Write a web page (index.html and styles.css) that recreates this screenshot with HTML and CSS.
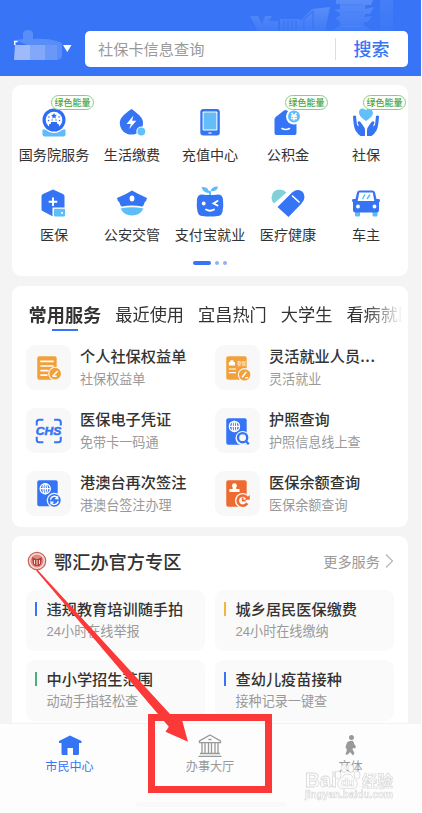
FILE: index.html
```html
<!DOCTYPE html>
<html lang="zh-CN">
<head>
<meta charset="utf-8">
<title>市民中心</title>
<link rel="stylesheet" href="styles.css">
</head>
<body>
<div class="app">
  <header class="header">
    <svg class="skyline" width="172" height="31" viewBox="0 0 172 31">
      <defs><linearGradient id="sky" x1="0" y1="0" x2="0" y2="1"><stop offset="0" stop-color="#7ba5fb" stop-opacity=".5"/><stop offset="1" stop-color="#6f9dfa" stop-opacity=".15"/></linearGradient></defs>
      <path fill="url(#sky)" d="M0 16h8l4 8 3-8h7l-3 5h9v10H8zM30 19h20v12H30zM50 21l12-12 18-2-5 24H50z"/>
      <path d="M54 31V19l9-8v20M34 20v11M38 20v11M42 20v11M46 20v11" stroke="#3b77f5" stroke-width="1.2" fill="none"/>
      <path fill="url(#sky)" d="M86 0h37l-2 5h-6v4l9-2-4 7h-5v3l7-1-4 6h-4v3l8 6H82l8-6v-3l-5-4 5-2v-3l-6-3 6-1V4h-4z"/>
      <path d="M91 5h22M91 12h22M91 19h22M90 26h24" stroke="#4c82f6" stroke-width="1.5"/>
      <path fill="url(#sky)" d="M130 0h13v31h-13z" opacity=".4"/>
    </svg>
    <div class="city">
      <svg width="60" height="34" viewBox="0 0 60 34">
        <path fill="#598df8" d="M4 11l7-1V4q1-3 5-3t5 3v6q14-1 24 2l5 2v13q-1 4-6 4H15V16z"/>
        <path fill="#9ebafb" d="M3 16h15v15H2z"/><path fill="#83a8fa" d="M18 16h15v15H18z"/><path fill="#6a98f9" d="M33 16h12v15H33z"/>
        <path d="M2.700 16v-3.500h3" stroke="#fff" stroke-width="1.500" fill="none"/><path fill="#fff" d="M51 16h8.500l-4.200 7z"/>
      </svg>
    </div>
    <div class="search"><span class="placeholder">社保卡信息查询</span><span class="search-btn">搜索</span></div>
  </header>

  <main class="main">
    <section class="card apps">
      <div class="app-grid">
        <div class="app-item"><span class="badge">绿色能量</span>
          <svg class="ico" viewBox="0 0 30 30"><path fill="#5fbcf8" d="M3.500 22.500h23v5q0 2-2 2h-19q-2 0-2-2z"/><circle cx="15" cy="13.500" r="12.500" fill="#fff"/><circle cx="15" cy="13" r="11.500" fill="#2f6cf5"/><circle cx="15" cy="13" r="8.300" fill="#fff"/><path fill="#2f6cf5" d="M10 21.500v-4l2-1v-1.500h6v1.500l2 1v4q-5 2-10 0zM15 6l.9 1.800 2 .3-1.400 1.400.3 2-1.800-1-1.800 1 .3-2-1.400-1.400 2-.3z"/><g fill="#2f6cf5"><circle cx="10" cy="10" r=".8"/><circle cx="20" cy="10" r=".8"/><circle cx="9.500" cy="13.500" r=".8"/><circle cx="20.500" cy="13.500" r=".8"/><circle cx="13" cy="13" r=".7"/><circle cx="17" cy="13" r=".7"/></g></svg>
          <span class="app-label">国务院服务</span></div>
        <div class="app-item">
          <svg class="ico" viewBox="0 0 30 30"><path fill="#3574f5" d="M14.500 2Q17 3.500 22 8q4 3.700 4 8a11.600 11.600 0 0 1-23.200 0q0-4.300 4-8Q12 3.500 14.500 2z"/><path fill="#fff" d="M16.500 8.500l-7 8.500h4.300l-1.500 5 7-8.200h-4.200z"/><circle cx="24.300" cy="24.500" r="5" fill="#fff"/><circle cx="24.300" cy="24.500" r="3.900" fill="#5fc0fa"/></svg>
          <span class="app-label">生活缴费</span></div>
        <div class="app-item">
          <svg class="ico" viewBox="0 0 30 30"><rect x="5.300" y="2" width="19.500" height="26.500" rx="3" fill="#3574f5"/><rect x="7.600" y="4.500" width="14.800" height="19" rx="1" fill="#fff"/><rect x="8.600" y="5.500" width="12.800" height="17" rx=".5" fill="#62bdf9"/><path stroke="#fff" stroke-width="1.200" d="M13.500 26h3"/></svg>
          <span class="app-label">充值中心</span></div>
        <div class="app-item"><span class="badge">绿色能量</span>
          <svg class="ico" viewBox="0 0 30 30"><path fill="#3574f5" d="M1.500 26V12.500q0-1.500 1.200-2.500L11 3.500q1.500-1 3 0l9.500 7.500V26q0 2-2 2h-18q-2 0-2-2z"/><path d="M9 21.500q3.700 2 7.500 0" stroke="#fff" stroke-width="1.600" stroke-linecap="round" fill="none"/><circle cx="21" cy="9.500" r="8" fill="#fff"/><circle cx="21" cy="9.500" r="6" fill="#61bcf8"/><path d="M18.500 6l2.500 3 2.500-3M18 9.300h6M18 11.500h6M21 9v4.500" stroke="#fff" stroke-width="1.400" fill="none"/></svg>
          <span class="app-label">公积金</span></div>
        <div class="app-item"><span class="badge">绿色能量</span>
          <svg class="ico" viewBox="0 0 30 30"><path fill="#61bff9" d="M15 14Q8 9.500 8 5.500T11.700 1.500q2.200 0 3.300 1.800 1.100-1.800 3.300-1.800T22 5.500Q22 9.500 15 14z"/><path id="hand" fill="#3574f5" d="M2 9q1.500-1.200 3 0l1 9 2 1.500-1.500-4q1-2 3-.5l3.500 5q1 1.400 1 3V29H9.500Q7 27.500 4.500 23.500 2.500 20 2 9z"/><use href="#hand" transform="matrix(-1 0 0 1 30 0)"/></svg>
          <span class="app-label">社保</span></div>
        <div class="app-item">
          <svg class="ico" viewBox="0 0 30 30"><path fill="#3574f5" d="M14 1.500L24 6q1.500.7 1.500 2.500v13q0 1-.8 1.500L14 28.500 3.500 23q-1-.6-1-1.500v-13q0-1.700 1.500-2.500z"/><path d="M14 9.500v8.500M9.700 13.700h8.600" stroke="#fff" stroke-width="2"/><path fill="#fff" d="M13.500 19.500h13v9.500h-13z"/><rect x="15" y="20.700" width="11" height="7.800" rx="1" fill="#5dbdf8"/><path stroke="#fff" stroke-width="1.500" d="M22 25h2"/></svg>
          <span class="app-label">医保</span></div>
        <div class="app-item">
          <svg class="ico" viewBox="0 0 30 30"><path fill="#3574f5" d="M15 2.500q6 3.500 15 7.500-.5 3-2.500 4.500-1 4-2.500 4-10-2-20 0-1.500 0-2.500-4Q.5 13 0 10 9 6.500 15 2.500z"/><ellipse cx="15" cy="10.500" rx="2.400" ry="3" fill="#fff"/><path fill="#5dbdf8" d="M3.500 20.500q11.500-2.500 23 0Q23 27.500 15 27.500T3.500 20.500z"/></svg>
          <span class="app-label">公安交管</span></div>
        <div class="app-item">
          <svg class="ico tall" viewBox="0 0 30 34"><path d="M15 12V6" stroke="#5dbdf8" stroke-width="2"/><path fill="#5dbdf8" d="M14.500 8Q8 8 6.500 2q7-1 8 6zM15.500 6Q17 1 23 1.500 22 7 15.500 6z"/><path fill="#3574f5" d="M7 9.500q8 1 16 0 4.500 0 5 5 .8 7-.5 12-1 4.500-5 4.500-7.500 1-15 0-4 0-5-4.500-1.300-5-.5-12 .5-5 5-5z"/><circle cx="8.700" cy="18.500" r="1.900" fill="#fff"/><path d="M22.500 16l-4 2.500 4 2M11 24.500q4 2.500 8 0" stroke="#fff" stroke-width="1.900" fill="none" stroke-linecap="round"/></svg>
          <span class="app-label">支付宝就业</span></div>
        <div class="app-item">
          <svg class="ico wide" viewBox="0 0 34 30"><path fill="#80d1da" d="M3 15.500Q.5 13 .5 9.800 1 1.500 9 1.500q3.500 0 6.500 3z"/><path fill="#3574f5" d="M6.500 19L21 4.500q3-3 6.500-2.500 5.500.7 6 7 0 3.500-3 6.500L17.500 29z"/><path d="M21.500 8l6.500 6" stroke="#fff" stroke-width="1.700" stroke-linecap="round"/></svg>
          <span class="app-label">医疗健康</span></div>
        <div class="app-item">
          <svg class="ico" viewBox="0 0 30 30"><path fill="#5dbdf8" d="M4 23h5v4.500q0 1-1 1H5q-1 0-1-1zM21.500 23h5v4.500q0 1-1 1h-3q-1 0-1-1z"/><path fill="#3574f5" d="M6 4.500q.5-2 2.500-2h13q2 0 2.500 2L25.500 11H28q1 0 1 1.500t-1 1.500v8q0 2.500-2.500 2.500h-21Q2 24.500 2 22v-8q-1 0-1-1.500T2 11h2.500z"/><path fill="#fff" d="M8.300 4.500h13.400l1.600 8.500H6.700z"/><path d="M14 6.500L11.500 11M19 6.500L16 11" stroke="#5dbdf8" stroke-width="1.500"/><circle cx="7" cy="18.500" r="1.900" fill="#fff"/><circle cx="23.500" cy="18.500" r="1.900" fill="#fff"/></svg>
          <span class="app-label">车主</span></div>
      </div>
      <div class="pager"><i class="on"></i><i></i><i></i></div>
    </section>

    <section class="card services">
      <div class="tabs"><span class="tab active">常用服务</span><span class="tab">最近使用</span><span class="tab">宜昌热门</span><span class="tab">大学生</span><span class="tab">看病就医</span></div>
      <div class="service-grid">
        <div class="service"><div class="tile"><svg viewBox="0 0 44 44"><path fill="#f2a13a" d="M13 11h15q2 0 2 2v21H13q-2 0-2-2V13q0-2 2-2z"/><path d="M14 16h13M14 20.500h13M14 25h8M14 29.500h7" stroke="#fff" stroke-width="1.600"/><circle cx="28.500" cy="28" r="6.800" fill="#f8f8f8"/><circle cx="28.500" cy="28" r="5.700" fill="#f2a13a"/><path d="M26 30.500l5-5M26 30.500h4" stroke="#fff" stroke-width="1.500"/></svg></div><div class="txt"><b>个人社保权益单</b><span>社保权益单</span></div></div>
        <div class="service"><div class="tile"><svg viewBox="0 0 44 44"><rect x="11" y="11" width="20" height="23" rx="2" fill="#f2a13a"/><path fill="#fff" d="M13.500 16.500h6V20h-6zM15 15h3v1.500h-3z"/><text x="21.500" y="20" font-size="4.500" fill="#fff">参保</text><path d="M13.500 23.500h7M13.500 27h7" stroke="#fff" stroke-width="1"/><circle cx="29" cy="29.200" r="6.700" fill="#f8f8f8"/><circle cx="29" cy="29.200" r="5.600" fill="#f2a13a"/><path d="M26.500 31.500l4-5M29.500 32h3" stroke="#fff" stroke-width="1.600"/></svg></div><div class="txt"><b>灵活就业人员<span class="dots">...</span></b><span>灵活就业</span></div></div>
        <div class="service"><div class="tile"><svg viewBox="0 0 44 44"><path d="M10.500 17v-3q0-2.500 2.500-2.500h4M27.500 11.500h4q2.500 0 2.500 2.500v3M10.500 28v3q0 2.500 2.500 2.500h4M27.500 33.500h4q2.500 0 2.500-2.500v-3" fill="none" stroke="#3574f5" stroke-width="2"/><text x="9.500" y="26.500" textLength="25" lengthAdjust="spacingAndGlyphs" font-family="Liberation Sans" font-size="11" font-weight="700" font-style="italic" fill="#3574f5" stroke="#3574f5" stroke-width=".5">CHS</text></svg></div><div class="txt"><b>医保电子凭证</b><span>免带卡一码通</span></div></div>
        <div class="service"><div class="tile"><svg viewBox="0 0 44 44"><rect x="11" y="10" width="20" height="26" rx="2" fill="#3574f5"/><g fill="none" stroke="#fff" stroke-width="1.200"><circle cx="19" cy="18" r="5"/><ellipse cx="19" cy="18" rx="2.200" ry="5"/><path d="M14 18h10M19 13v10"/></g><circle cx="27" cy="29.500" r="7" fill="#f8f8f8"/><circle cx="27" cy="29" r="4.500" fill="none" stroke="#3574f5" stroke-width="2.300"/><path d="M30 32l3 3.500" stroke="#3574f5" stroke-width="2.300"/></svg></div><div class="txt"><b>护照查询</b><span>护照信息线上查</span></div></div>
        <div class="service"><div class="tile"><svg viewBox="0 0 44 44"><rect x="11" y="9" width="20" height="25.500" rx="2" fill="#3574f5"/><g fill="none" stroke="#fff" stroke-width="1.200"><circle cx="18.800" cy="17.300" r="5"/><ellipse cx="18.800" cy="17.300" rx="2.200" ry="5"/><path d="M13.800 17.300h10M18.800 12.300v10"/></g><circle cx="27.700" cy="28.700" r="7.500" fill="#f8f8f8"/><circle cx="27.700" cy="28.700" r="6.200" fill="#3574f5"/><path d="M24 28a3.800 3.800 0 0 1 7-1.500v-1.700M31.500 29.500a3.800 3.800 0 0 1-7 1.500v1.700M28.500 27h3M27 30.500h-3" fill="none" stroke="#fff" stroke-width="1.300"/></svg></div><div class="txt"><b>港澳台再次签注</b><span>港澳台签注办理</span></div></div>
        <div class="service"><div class="tile"><svg viewBox="0 0 44 44"><rect x="11" y="9" width="20" height="26" rx="2" fill="#ed6b30"/><circle cx="19" cy="14.300" r="2.400" fill="#fff"/><path fill="#fff" d="M17.700 14.500h2.600l.5 3H24v3H14v-3h3.200z"/><circle cx="27" cy="29" r="7.500" fill="#f8f8f8"/><path d="M31.500 31.500a5 5 0 1 1 .3-4.500" fill="none" stroke="#ed6b30" stroke-width="2.600"/><path fill="#ed6b30" d="M29 28h5v-4.500z"/><path d="M27 26v3h3" fill="none" stroke="#ed6b30" stroke-width="1.600"/></svg></div><div class="txt"><b>医保余额查询</b><span>医保余额查询</span></div></div>
      </div>
    </section>

    <section class="card zone">
      <div class="zone-head">
        <svg width="20" height="20" viewBox="0 0 20 20"><circle cx="10" cy="10" r="8.700" fill="#f4dcd8" stroke="#c9605a" stroke-width="1.200"/><circle cx="10" cy="10" r="6.500" fill="#d98d85"/><path fill="#b83c36" d="M5 6l4 2h2l4-2-1 7-2 2H8l-2-2z"/><path d="M7.500 9v4M10 9v5M12.500 9v4" stroke="#f6dfda" stroke-width="1"/></svg>
        <h2>鄂汇办官方专区</h2><span class="more">更多服务</span>
        <svg class="chev" width="9" height="16" viewBox="0 0 9 16"><path d="M1 1.500L7.500 8 1 14.500" fill="none" stroke="#b5b5b5" stroke-width="1.200"/></svg>
      </div>
      <div class="zone-grid">
        <div class="zone-item blue"><b>违规教育培训随手拍</b><span>24小时在线举报</span></div>
        <div class="zone-item yellow"><b>城乡居民医保缴费</b><span>24小时在线缴纳</span></div>
        <div class="zone-item green"><b>中小学招生范围</b><span>动动手指轻松查</span></div>
        <div class="zone-item blue"><b>查幼儿疫苗接种</b><span>接种记录一键查</span></div>
      </div>
    </section>
  </main>

  <nav class="nav">
    <div class="nav-items">
      <div class="nav-item current"><svg viewBox="0 0 26 24"><path fill="#3574f5" d="M13 1.500L24.500 7v2H22v10.500q0 1.500-1.500 1.500H16v-7h-5.500v7H6q-1.500 0-1.500-1.500V9H2V7z"/></svg><span>市民中心</span></div>
      <div class="nav-item"><svg viewBox="0 0 26 24"><path d="M13 1L23.500 7v1.700h-21V7zM3 19.500h20M1.500 22.300h23M5 9v10M8 9v10M11.500 9v10M14.500 9v10M18 9v10M21 9v10M11.500 5.500h3" fill="none" stroke="#999" stroke-width="1.300"/></svg><span>办事大厅</span></div>
      <div class="nav-item"><svg viewBox="0 0 26 24"><g fill="#999"><circle cx="13.500" cy="3.500" r="2.500"/><path d="M9 8.500q2.500-2.500 6-1.500l1.500 3.500 1.500 2-1 2-2-.5-.5 1.500 2 3.500-1.500 2.500-3-3.500-2 2.500H7.300l1.700-4.500-1.500-3z"/></g></svg><span>文体</span></div>
    </div>
    <div class="home-bar"></div>
  </nav>

  <svg class="watermark" width="96" height="40" viewBox="0 0 96 40">
    <g fill="#fefefe" stroke="#d2d2d2" stroke-width=".8" font-family="Liberation Sans, Noto Sans CJK SC, sans-serif">
      <ellipse cx="37" cy="14" rx="3" ry="4"/><ellipse cx="43" cy="7.500" rx="3" ry="4"/><ellipse cx="50" cy="7.500" rx="3" ry="4"/><ellipse cx="56" cy="14" rx="3" ry="4"/>
      <path d="M46.500 13q4 0 6 4 5 4 3.500 8-2 4-9.500 2-7.500 2-9.500-2-1.500-4 3.500-8 2-4 6-4z"/>
      <text x="4" y="26" font-size="20" textLength="32" lengthAdjust="spacingAndGlyphs" font-weight="700">Bai</text><text x="40" y="25" font-size="11.500" textLength="13" font-weight="700" stroke-width=".6">du</text><text x="61" y="25.500" font-size="15.500" textLength="31" font-weight="700" stroke-width=".7">经验</text>
      <text x="4" y="37" font-size="10.500" textLength="88" lengthAdjust="spacingAndGlyphs" font-weight="700" stroke-width=".6">jingyan.baidu.com</text>
    </g>
  </svg>
  <div class="highlight"></div>
  <svg class="arrow" width="160" height="180" viewBox="32 566 160 180"><path fill="#fc3939" d="M36 570.500l1.500-.8L175.500 720l6.200-1.200 6.300 23-22.500-10 3.300-5z"/></svg>
</div>
</body>
</html>
```
FILE: styles.css
```css
* { box-sizing: border-box; }
body { margin: 0; background: #fff; font-family: "Noto Sans CJK SC", sans-serif; color: #333; }
.app { position: relative; width: 421px; height: 813px; overflow: hidden; display: flex; flex-direction: column; background: #f4f4f4; white-space: nowrap; }

.header { position: relative; flex: none; height: 76px; padding: 29px 13px 0 12px; display: flex; background: #3875f6; }
.skyline { position: absolute; left: 250px; top: 0; }
.city { width: 72.5px; height: 34px; }
.search { position: relative; flex: 1; height: 36px; margin-top: 2px; padding-left: 13.500px; display: flex; align-items: center; background: #fff; border-radius: 5px; }
.placeholder { flex: 1; margin-top: -3px; font-size: 15.200px; color: #999; }
.search-btn { width: 73px; height: 22px; padding-left: 17.500px; border-left: 1px solid #ddd; line-height: 20px; font-size: 18px; font-weight: 500; color: #3875f6; }

.main { flex: 1; min-height: 0; overflow: hidden; padding: 9px 13px 0 12px; display: flex; flex-direction: column; gap: 10px; }
.card { flex: none; background: #fff; border-radius: 9px; }

.apps { height: 191px; padding: 20px 3px 0; }
.app-grid { display: grid; grid-template-columns: repeat(5, 78px); grid-auto-rows: 80.500px; }
.app-item { position: relative; display: flex; flex-direction: column; align-items: center; }
.ico { width: 30px; height: 30px; margin: 2px 0 8.500px; }
.ico.tall { height: 34px; margin: -1px 0 7.500px; }
.ico.wide { width: 34px; }
.app-label { line-height: 16px; font-size: 14.100px; }
.badge { position: absolute; z-index: 1; left: 36px; top: -10px; width: 43px; height: 15px; border: 1px solid #8dcc80; border-radius: 8px; background: #fff; text-align: center; font-size: 9px; line-height: 13px; font-weight: 500; color: #4ca63b; }
.pager { height: 4px; margin-top: -5px; display: flex; justify-content: center; gap: 4px; }
.pager i { width: 4px; height: 4px; border-radius: 2px; background: #8db2fa; }
.pager .on { width: 18px; background: #3875f6; }

.services { height: 241px; padding: 14px 5px 0 14px; }
.tabs { display: flex; gap: 14px; height: 31px; padding-left: 2.500px; overflow: hidden; line-height: 28px; font-size: 17.200px; -webkit-mask-image: linear-gradient(90deg, #000 90%, transparent); mask-image: linear-gradient(90deg, #000 90%, transparent); }
.tab { flex: none; }
.tab.active { height: 31px; font-size: 18.200px; font-weight: 700; background: linear-gradient(#3875f6, #3875f6) 23.500px 28.500px / 26px 2px no-repeat; }
.service-grid { display: grid; grid-template-columns: 189px 180px; grid-auto-rows: 63px; padding-top: 14px; }
.service { display: flex; gap: 9px; }
.tile { width: 45px; height: 45px; border-radius: 9px; background: #f8f8f8; }
.tile svg { display: block; width: 45px; height: 45px; }
.txt { display: flex; flex-direction: column; }
.txt b, .zone-item b { height: 24px; line-height: 21px; font-size: 15.200px; font-weight: 500; }
.txt span, .zone-item span { line-height: 20px; font-size: 13.100px; color: #999; }
.txt .dots { font-size: inherit; line-height: inherit; color: inherit; letter-spacing: .6px; }

.zone { height: 220px; padding: 13px 14px 0; margin-top: -1px; }
.zone-head { display: flex; align-items: center; height: 24px; padding-left: 1px; }
.zone-head h2 { flex: 1; margin: 0 0 0 7px; font-size: 18.200px; line-height: 24px; font-weight: 500; }
.more { font-size: 14.200px; line-height: 24px; color: #999; }
.chev { margin-left: 5px; }
.zone-grid { display: grid; grid-template-columns: 179px 179px; grid-auto-rows: 61px; gap: 9px 10px; padding-top: 17px; }
.zone-item { display: flex; flex-direction: column; padding: 8px 0 0 20.500px; border-radius: 9px; background: linear-gradient(var(--bar), var(--bar)) 9px 12px / 2px 14px no-repeat #fafafa; }
.zone-item span { font-family: "Liberation Sans", "Noto Sans CJK SC", sans-serif; }
.blue { --bar: #3875f6; }
.yellow { --bar: #efb73b; }
.green { --bar: #4eae7a; }

.nav { flex: none; height: 89px; background: #fdfdfd; box-shadow: 0 -1px 1px #f3f3f3; display: flex; flex-direction: column; align-items: center; }
.nav-items { display: grid; grid-template-columns: repeat(3, 140.500px); height: 78px; padding-top: 9.500px; margin-left: -1px; }
.nav-item { display: flex; flex-direction: column; align-items: center; font-size: 12.100px; line-height: 16px; color: #999; }
.nav-item svg { width: 26px; height: 24px; margin-bottom: .5px; }
.current { color: #3875f6; }
.home-bar { width: 150px; height: 5px; border-radius: 3px; background: #f9f9f9; }

.watermark { position: absolute; left: 301px; top: 761px; opacity: .85; }
.highlight { position: absolute; left: 148px; top: 714px; width: 124px; height: 79px; border: 7px solid #fc3939; }
.arrow { position: absolute; left: 32px; top: 566px; }
```
